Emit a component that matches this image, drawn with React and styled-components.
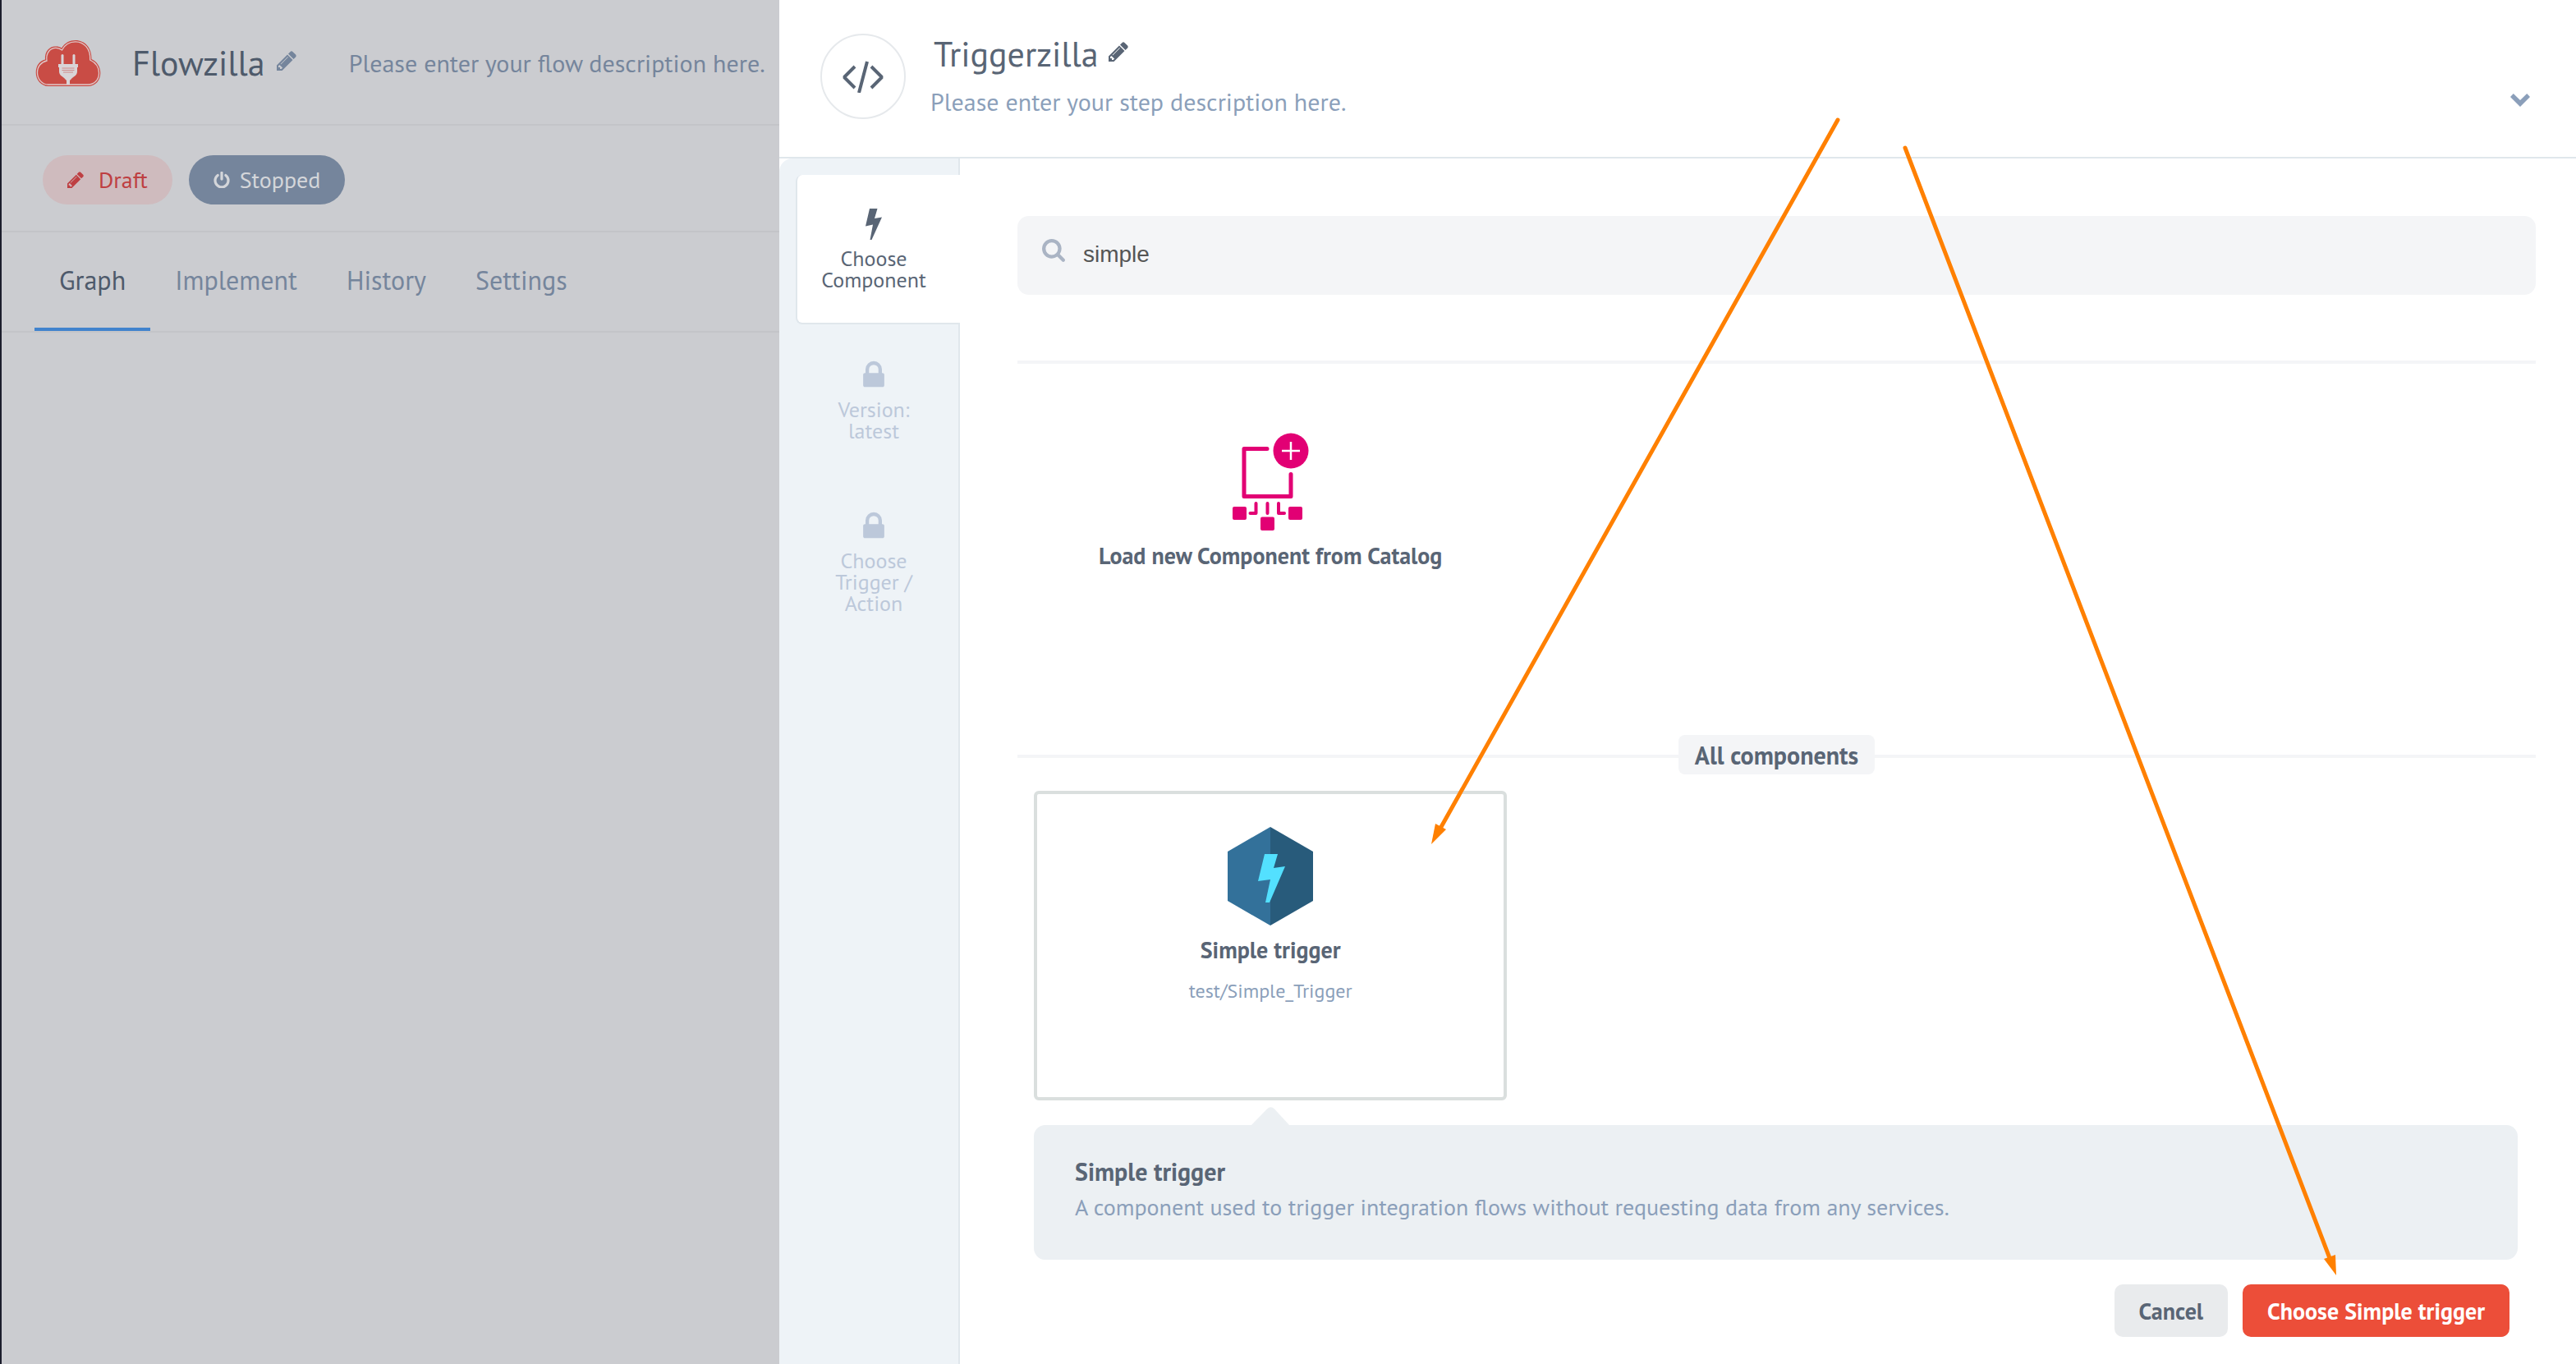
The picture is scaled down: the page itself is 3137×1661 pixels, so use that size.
import React, { useState } from "react";
import styled, { createGlobalStyle, css } from "styled-components";

const ink = "#596575";
const muted = "#8b9fba";
const line = "#e0e7ec";
const soft = "#f4f5f7";

const GlobalStyle = createGlobalStyle`
  *, *::before, *::after { box-sizing: border-box; }
  body {
    margin: 0;
    background: #fff;
    color: ${ink};
    font-family: "PT Sans", Lato, "Noto Sans", sans-serif;
    font-size: 28px;
    line-height: 36px;
  }
  h1, h2, h3, p { margin: 0; }
  button { font-family: inherit; }
`;

const Shell = styled.div`
  position: relative;
  display: grid;
  grid-template-columns: 949px minmax(0, 1fr);
  min-height: 100vh;
`;

/* ---------- dimmed flow page ---------- */

const FlowPage = styled.main`
  background: #cbccd0;
  border-left: 2px solid #1b1d2c;
`;

const FlowHeader = styled.header`
  display: flex;
  align-items: center;
  height: 153px;
  padding: 2px 12px 0 41px;
  border-bottom: 2px solid #c3c4c8;
  white-space: nowrap;
`;

const FlowTitle = styled.h1`
  margin: 0 14px 0 38px;
  color: #4e5a6b;
  font-size: 42px;
  font-weight: 400;
  line-height: 52px;
`;

const FlowDescription = styled.p`
  margin-left: 64px;
  color: #75859c;
  font-size: 30px;
`;

const IconButton = styled.button`
  display: inline-flex;
  padding: 0 0 6px;
  border: 0;
  background: none;
  color: ${(p) => p.$color};
  cursor: pointer;
`;

const StatusBar = styled.div`
  display: flex;
  align-items: center;
  gap: 20px;
  height: 130px;
  padding: 4px 50px 0;
  border-bottom: 2px solid #c3c4c8;
`;

const Pill = styled.span`
  display: flex;
  align-items: center;
  gap: ${(p) => (p.$tone === "draft" ? 18 : 12)}px;
  height: 60px;
  padding: 0 30px;
  border-radius: 30px;
  font-size: 28px;
  ${(p) =>
    p.$tone === "draft"
      ? css`background: #cfbbbe; color: #be3f42;`
      : css`background: #75859c; color: #d4d6da;`}
`;

const Tabs = styled.nav`
  display: flex;
  height: 122px;
  padding-left: 40px;
  border-bottom: 2px solid #c3c4c8;
`;

const Tab = styled.a`
  display: flex;
  align-items: center;
  height: 120px;
  padding: 0 30px;
  border-bottom: 4px solid ${(p) => (p.$active ? "#4183cd" : "transparent")};
  color: ${(p) => (p.$active ? "#4e5a6b" : "#75859c")};
  font-size: 32px;
  text-decoration: none;
`;

/* ---------- step editor ---------- */

const Editor = styled.section`
  display: flex;
  flex-direction: column;
  background: #fff;
`;

const EditorHeader = styled.header`
  display: flex;
  align-items: center;
  gap: 30px;
  height: 193px;
  padding: 0 56px 6px 50px;
  border-bottom: 2px solid ${line};
`;

const StepBadge = styled.div`
  display: flex;
  align-items: center;
  justify-content: center;
  flex: none;
  width: 104px;
  height: 104px;
  border: 2px solid #e6e9ec;
  border-radius: 50%;
`;

const StepText = styled.div`
  display: flex;
  flex: 1;
  flex-direction: column;
  gap: 14px;
  padding-bottom: 4px;
`;

const StepTitleRow = styled.div`
  display: flex;
  align-items: center;
  gap: 12px;
  padding-left: 4px;
`;

const StepTitle = styled.h2`
  font-size: 42px;
  font-weight: 400;
  line-height: 52px;
`;

const StepDescription = styled.p`
  color: ${muted};
  font-size: 30px;
`;

const CollapseButton = styled(IconButton)`
  padding: 58px 0 0;
`;

const EditorBody = styled.div`
  display: grid;
  flex: 1;
  grid-template-columns: 220px minmax(0, 1fr);
`;

const Steps = styled.nav`
  display: flex;
  flex-direction: column;
  gap: 2px;
  padding: 20px 0 0 20px;
  border-right: 2px solid ${line};
  border-top-left-radius: 16px;
  background: #eef3f7;
`;

const Step = styled.button`
  display: flex;
  flex-direction: column;
  align-items: center;
  gap: 9px;
  margin-right: -2px;
  padding: 40px 38px 39px 26px;
  border: 2px solid transparent;
  border-width: 0 0 2px 2px;
  border-radius: 8px 0 0 8px;
  background: none;
  color: #bcc8da;
  font-size: 26px;
  line-height: 26px;
  text-align: center;
  ${(p) =>
    p.$active &&
    css`
      border-color: ${line};
      background: #fff;
      color: ${ink};
    `}
`;

const StepIcon = styled.span`
  display: flex;
  align-items: center;
  justify-content: center;
  height: 40px;
`;

const Content = styled.div`
  padding: 70px 49px 32px 70px;
`;

const SearchBox = styled.label`
  display: flex;
  align-items: center;
  gap: 22px;
  height: 96px;
  padding: 0 30px;
  border-radius: 14px;
  background: ${soft};
  color: #aab4c4;
`;

const SearchInput = styled.input`
  flex: 1;
  padding: 0 0 2px;
  border: 0;
  outline: 0;
  background: none;
  color: #555;
  font-family: "Liberation Sans", Arial, sans-serif;
  font-size: 28px;
`;

const SearchIcon = styled.span`
  display: flex;
  padding-bottom: 12px;
`;

const Divider = styled.hr`
  height: 4px;
  margin: 80px 0 40px;
  border: 0;
  background: ${soft};
`;

const SectionRule = styled.div`
  display: flex;
  align-items: center;
  margin: 35px 0 20px;
  &::before,
  &::after {
    content: "";
    flex: 1;
    height: 4px;
    margin-top: 4px;
    background: ${soft};
  }
`;

const SectionLabel = styled.h3`
  padding: 7px 20px 5px;
  border-radius: 8px;
  background: ${soft};
  font-size: 30px;
  font-weight: 700;
`;

const CardGrid = styled.div`
  display: grid;
  grid-template-columns: repeat(3, minmax(0, 1fr));
  gap: 40px;
  padding: 0 20px;
`;

const Card = styled.button`
  display: flex;
  flex-direction: column;
  align-items: center;
  height: 377px;
  padding: 40px 20px;
  border: 4px solid ${(p) => (p.$selected ? "#dadfde" : "transparent")};
  border-radius: 6px;
  background: #fff;
  color: ${ink};
  cursor: pointer;
`;

const CardTitle = styled.span`
  margin-top: 12px;
  font-size: 28px;
  font-weight: 700;
  line-height: 36px;
`;

const CardPath = styled.span`
  margin-top: 16px;
  color: ${muted};
  font-size: 24px;
  line-height: 32px;
`;

const Details = styled.section`
  position: relative;
  margin: 30px 22px 30px 20px;
  padding: 34px 50px 44px;
  border-radius: 14px;
  background: #ecf0f3;
`;

const Pointer = styled.svg`
  position: absolute;
  top: -22px;
  left: 265px;
`;

const DetailsTitle = styled.h3`
  font-size: 30px;
  line-height: 46px;
`;

const DetailsText = styled.p`
  color: ${muted};
  font-size: 28px;
  line-height: 40px;
`;

const Actions = styled.footer`
  display: flex;
  justify-content: flex-end;
  gap: 18px;
  padding-right: 32px;
`;

const Button = styled.button`
  height: 64px;
  padding: 0 30px;
  border: 0;
  border-radius: 10px;
  background: ${(p) => (p.$primary ? "#ec4e39" : "#e9ebed")};
  color: ${(p) => (p.$primary ? "#fff" : ink)};
  font-size: 28px;
  font-weight: 700;
  cursor: pointer;
`;

const Annotations = styled.svg`
  position: absolute;
  top: 0;
  left: 0;
  width: 100%;
  height: auto;
  pointer-events: none;
`;

/* ---------- drawings ---------- */

const Glyph = ({ d, size, box = "0 0 1792 1792" }) => (
  <svg width={size} height={size} viewBox={box} fill="currentColor" aria-hidden="true">
    <path d={d} />
  </svg>
);

const PENCIL =
  "M491 1536l91-91-235-235-91 91v107h128v128h107zm523-928q0-22-22-22-10 0-17 7l-542 542q-7 7-7 17 0 22 22 22 10 0 17-7l542-542q7-7 7-17zm-54-192l416 416-832 832h-416v-416zm683 96q0 53-37 90l-166 166-416-416 166-165q36-38 90-38 53 0 91 38l235 234q37 39 37 91z";
const POWER =
  "M1664 896q0 156-61 298t-164 245-245 164-298 61-298-61-245-164-164-245-61-298q0-182 80.5-343t226.5-270q43-32 95.5-25t83.5 50q32 42 24.5 94.5t-49.5 84.5q-98 74-151.5 181t-53.5 228q0 104 40.5 198.5t109.5 163.5 163.5 109.5 198.5 40.5 198.5-40.5 163.5-109.5 109.5-163.5 40.5-198.5q0-121-53.5-228t-151.5-181q-42-32-49.5-84.5t24.5-94.5q31-43 84-50t95 25q146 109 226.5 270t80.5 343zm-640-768v640q0 52-38 90t-90 38-90-38-38-90v-640q0-52 38-90t90-38 90 38 38 90z";
const LOCK =
  "M640 768h512v-192q0-106-75-181t-181-75-181 75-75 181v192zm832 96v576q0 40-28 68t-68 28h-960q-40 0-68-28t-28-68v-576q0-40 28-68t68-28h32v-192q0-184 132-316t316-132 316 132 132 316v192h32q40 0 68 28t28 68z";
const SEARCH =
  "M1216 832q0-185-131.5-316.5t-316.5-131.5-316.5 131.5-131.5 316.5 131.5 316.5 316.5 131.5 316.5-131.5 131.5-316.5zm512 832q0 52-38 90t-90 38q-54 0-90-38l-343-342q-179 124-399 124-143 0-273.5-55.5t-225-150-150-225-55.5-273.5 55.5-273.5 150-225 225-150 273.5-55.5 273.5 55.5 225 150 150 225 55.5 273.5q0 220-124 399l343 343q37 37 37 90z";

const PencilIcon = ({ size }) => <Glyph d={PENCIL} size={size} box="128 128 1536 1536" />;

const CloudLogo = () => (
  <svg width="80" height="58" viewBox="0 0 80 58" aria-hidden="true">
    <path
      d="M16 57C7 57 .7 49 .7 40.500C.7 32 5 26 12 24.500C11 14 18 8 25 8.500C28 8.500 30 9 32 10.500C36 4 42 1 49 1C60 1 69 10 68.500 24C75 27 79.300 33 79.300 41C79.300 50 73 57 64 57Z"
      fill="#c94c45"
    />
    <path
      d="M16 55C8 55 2.500 48 2.500 40.500C2.500 33 7 27.500 14 26C12.500 15.500 19 10.300 25 10.300C28 10.300 30 11 32.500 13C36 6 42 2.800 49 2.800C59 2.800 67.500 11 66.700 25C73 28 77.500 33.500 77.500 41C77.500 49 72 55 64 55Z"
      fill="none"
      stroke="#dfc9ca"
      strokeWidth="1.300"
    />
    <g fill="#d9d5d8">
      <rect x="31.500" y="18" width="3" height="14" rx="1.500" />
      <rect x="45.500" y="18" width="3" height="14" rx="1.500" />
      <path d="M28 30h24v4h-1v5c0 5-5 6.500-7 9l-2 2v5h-4v-5l-2-2c-2-2.500-7-4-7-9v-5h-1z" />
    </g>
    <path d="M32.500 35h15M32.500 37.500h15M34 40h12" stroke="#cf8a8a" strokeWidth="1" />
  </svg>
);

const CodeIcon = () => (
  <svg width="54" height="40" viewBox="0 0 54 40" fill="none" stroke={ink} strokeWidth="4" aria-hidden="true">
    <path d="M17 8L4 21l13 13M37 8l13 13-13 13M32 2L22 40" strokeLinejoin="bevel" />
  </svg>
);

const BoltIcon = () => (
  <svg width="20" height="38" viewBox="0 0 20 38" fill="currentColor" aria-hidden="true">
    <path d="M5 0H14.500L11 12L20 10.500L7.500 38H5.500L9 19.500L0 21.500Z" />
  </svg>
);

const ChevronIcon = () => (
  <svg width="24" height="16" viewBox="0 0 24 16" aria-hidden="true">
    <path d="M0 4L3.800 0L12 8L20.200 0L24 4L12 16Z" fill={muted} />
  </svg>
);

const CatalogIcon = () => (
  <svg width="120" height="120" viewBox="0 0 120 120" fill="none" stroke="#e20074" aria-hidden="true">
    <path d="M56 19.500H28V77.500H85V50.500" strokeWidth="5" strokeLinecap="round" strokeLinejoin="round" />
    <circle cx="85" cy="22" r="21.500" fill="#e20074" stroke="none" />
    <path d="M74 22H96M85 11V33" stroke="#fff" strokeWidth="2.500" />
    <path d="M42.500 86V98H35.500M56.500 86V98M70 86V98H77" strokeWidth="4" strokeLinecap="round" strokeLinejoin="round" />
    <g fill="#e20074" stroke="none">
      <rect x="14" y="90" width="17" height="16" rx="2" />
      <rect x="48" y="102.500" width="17" height="16.500" rx="2" />
      <rect x="82" y="90" width="17" height="16" rx="2" />
    </g>
  </svg>
);

const TriggerIcon = () => (
  <svg width="104" height="120" viewBox="0 0 104 120" aria-hidden="true">
    <path d="M52 0L0 30V90L52 120Z" fill="#33719a" />
    <path d="M52 0L104 30V90L52 120Z" fill="#285b7b" />
    <path d="M45 33H61L56 50L70 48L51 92H46L52 64L37 66Z" fill="#53e0ff" />
  </svg>
);

export default function App() {
  const [query, setQuery] = useState("simple");

  return (
    <>
      <GlobalStyle />
      <Shell>
        <FlowPage>
          <FlowHeader>
            <CloudLogo />
            <FlowTitle>Flowzilla</FlowTitle>
            <IconButton $color="#75859c" aria-label="Edit flow name">
              <PencilIcon size={24} />
            </IconButton>
            <FlowDescription>Please enter your flow description here.</FlowDescription>
          </FlowHeader>
          <StatusBar>
            <Pill $tone="draft">
              <PencilIcon size={20} />
              Draft
            </Pill>
            <Pill $tone="stopped">
              <Glyph d={POWER} size={20} box="96 32 1600 1600" />
              Stopped
            </Pill>
          </StatusBar>
          <Tabs>
            <Tab href="#graph" $active>Graph</Tab>
            <Tab href="#implement">Implement</Tab>
            <Tab href="#history">History</Tab>
            <Tab href="#settings">Settings</Tab>
          </Tabs>
        </FlowPage>

        <Editor>
          <EditorHeader>
            <StepBadge>
              <CodeIcon />
            </StepBadge>
            <StepText>
              <StepTitleRow>
                <StepTitle>Triggerzilla</StepTitle>
                <IconButton $color={ink} aria-label="Edit step name">
                  <PencilIcon size={24} />
                </IconButton>
              </StepTitleRow>
              <StepDescription>Please enter your step description here.</StepDescription>
            </StepText>
            <CollapseButton $color={muted} aria-label="Collapse">
              <ChevronIcon />
            </CollapseButton>
          </EditorHeader>

          <EditorBody>
            <Steps>
              <Step $active>
                <StepIcon><BoltIcon /></StepIcon>
                Choose Component
              </Step>
              <Step>
                <StepIcon><Glyph d={LOCK} size={40} /></StepIcon>
                Version: latest
              </Step>
              <Step>
                <StepIcon><Glyph d={LOCK} size={40} /></StepIcon>
                Choose Trigger / Action
              </Step>
            </Steps>

            <Content>
              <SearchBox>
                <SearchIcon><Glyph d={SEARCH} size={28} box="64 128 1664 1664" /></SearchIcon>
                <SearchInput
                  aria-label="Search components"
                  value={query}
                  onChange={(e) => setQuery(e.target.value)}
                />
              </SearchBox>
              <Divider />
              <CardGrid>
                <Card>
                  <CatalogIcon />
                  <CardTitle>Load new Component from Catalog</CardTitle>
                </Card>
              </CardGrid>
              <SectionRule>
                <SectionLabel>All components</SectionLabel>
              </SectionRule>
              <CardGrid>
                <Card $selected>
                  <TriggerIcon />
                  <CardTitle>Simple trigger</CardTitle>
                  <CardPath>test/Simple_Trigger</CardPath>
                </Card>
              </CardGrid>
              <Details>
                <Pointer width="46" height="22" viewBox="0 0 46 22" aria-hidden="true">
                  <path d="M0 22L19 2.500Q23.500 -2 28 2.500L46 22Z" fill="#ecf0f3" />
                </Pointer>
                <DetailsTitle>Simple trigger</DetailsTitle>
                <DetailsText>
                  A component used to trigger integration flows without requesting data from any services.
                </DetailsText>
              </Details>
              <Actions>
                <Button>Cancel</Button>
                <Button $primary>Choose Simple trigger</Button>
              </Actions>
            </Content>
          </EditorBody>
        </Editor>

        <Annotations viewBox="0 0 3137 1661" aria-hidden="true">
          <g stroke="#ff8000" strokeWidth="5" strokeLinecap="round">
            <path d="M2238 146L1755 1007" />
            <path d="M2320 180L2837 1532" />
          </g>
          <g fill="#ff8000">
            <path d="M1743 1028L1748 1003L1761 1010Z" />
            <path d="M2845 1553L2830 1533L2844 1528Z" />
          </g>
        </Annotations>
      </Shell>
    </>
  );
}
